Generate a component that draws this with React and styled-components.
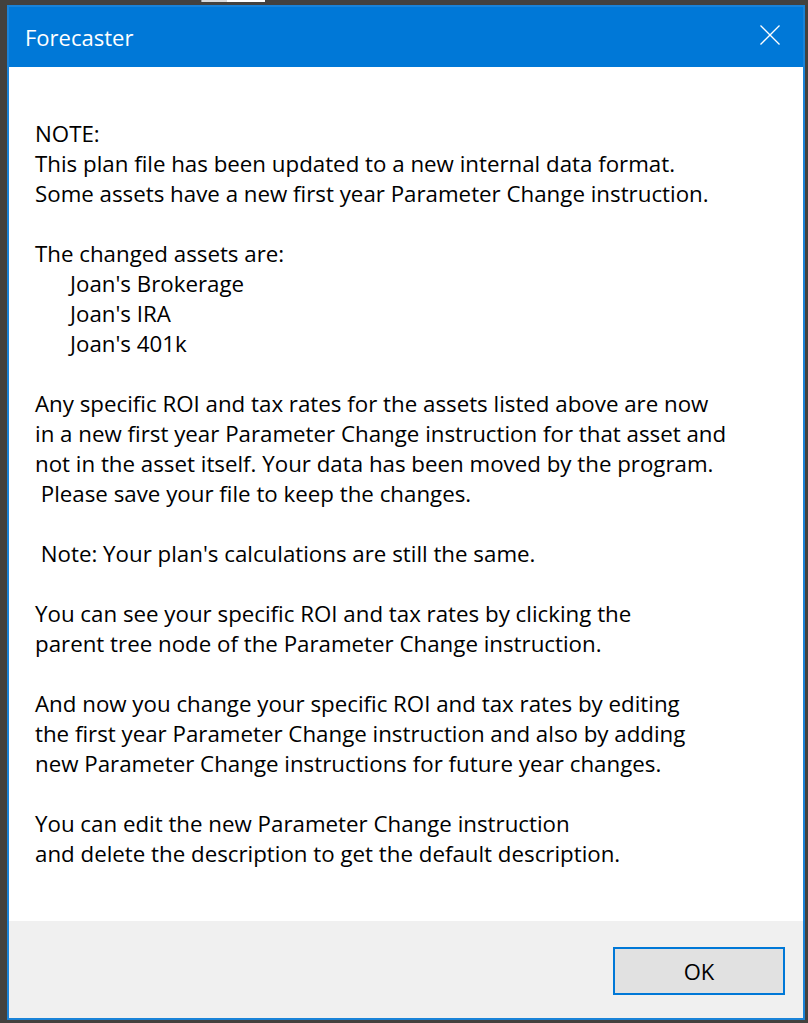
import React from "react";
import styled, { createGlobalStyle } from "styled-components";

const GlobalStyle = createGlobalStyle`
  html, body {
    margin: 0;
    padding: 0;
    background: #43413e;
  }
  body {
    font-family: "Open Sans", "Noto Sans", sans-serif;
  }
`;

const paragraphs = [
  {
    lines: [
      "NOTE:",
      "This plan file has been updated to a new internal data format.",
      "Some assets have a new first year Parameter Change instruction.",
    ],
  },
  {
    lines: ["The changed assets are:"],
    items: ["Joan's Brokerage", "Joan's IRA", "Joan's 401k"],
  },
  {
    lines: [
      "Any specific ROI and tax rates for the assets listed above are now",
      "in a new first year Parameter Change instruction for that asset and",
      "not in the asset itself. Your data has been moved by the program.",
      " Please save your file to keep the changes.",
    ],
  },
  {
    lines: [" Note: Your plan's calculations are still the same."],
  },
  {
    lines: [
      "You can see your specific ROI and tax rates by clicking the",
      "parent tree node of the Parameter Change instruction.",
    ],
  },
  {
    lines: [
      "And now you change your specific ROI and tax rates by editing",
      "the first year Parameter Change instruction and also by adding",
      "new Parameter Change instructions for future year changes.",
    ],
  },
  {
    lines: [
      "You can edit the new Parameter Change instruction",
      "and delete the description to get the default description.",
    ],
  },
];

const CloseIcon = () => (
  <svg width="20" height="20" viewBox="0 0 20 20" fill="none">
    <path d="M0.5 0.5 L19.5 19.5 M19.5 0.5 L0.5 19.5" stroke="#fff" strokeWidth="1.3" />
  </svg>
);

const App = () => (
  <>
    <GlobalStyle />
    <Desktop>
      <BackStrip>
        <BackTab />
        <BackTab $light />
      </BackStrip>
      <Window>
        <TitleBar>
          <Title>Forecaster</Title>
          <CloseButton aria-label="Close">
            <CloseIcon />
          </CloseButton>
        </TitleBar>
        <Body>
          {paragraphs.map((p, i) => (
            <Paragraph key={i}>
              {p.lines.map((line) => (
                <Line key={line}>{line}</Line>
              ))}
              {p.items &&
                p.items.map((item) => (
                  <Line key={item} $indent>
                    {item}
                  </Line>
                ))}
            </Paragraph>
          ))}
        </Body>
        <Footer>
          <OkButton>OK</OkButton>
        </Footer>
      </Window>
    </Desktop>
  </>
);

const Desktop = styled.div`
  width: 808px;
  height: 1023px;
  display: flex;
  flex-direction: column;
  overflow: hidden;
`;

const BackStrip = styled.div`
  height: 5px;
  display: flex;
  align-items: flex-start;
  padding-left: 201px;
`;

const BackTab = styled.div`
  height: 2px;
  width: ${(p) => (p.$light ? "38px" : "25px")};
  background: ${(p) => (p.$light ? "#ffffff" : "#dcdcdc")};
  border-left: ${(p) => (p.$light ? "none" : "1px solid #a0a0a0")};
`;

const Window = styled.div`
  box-sizing: border-box;
  margin-left: 7px;
  width: 798px;
  height: 1015px;
  border: 2px solid #1a83d8;
  display: flex;
  flex-direction: column;
  background: #fff;
`;

const TitleBar = styled.div`
  height: 60px;
  flex: none;
  background: #0078d7;
  display: flex;
  align-items: center;
  justify-content: space-between;
`;

const Title = styled.div`
  color: #fff;
  font-size: 22px;
  padding-left: 16px;
  padding-bottom: 1px;
`;

const CloseButton = styled.div`
  width: 66px;
  height: 60px;
  display: flex;
  align-items: center;
  justify-content: center;
  padding-bottom: 4px;
  box-sizing: border-box;
`;

const Body = styled.div`
  flex: 1;
  box-sizing: border-box;
  padding: 52px 0 0 26px;
  color: #000;
  font-size: 22.3px;
  line-height: 30px;
`;

const Paragraph = styled.div`
  margin-bottom: 30px;
`;

const Line = styled.div`
  white-space: pre;
  padding-left: ${(p) => (p.$indent ? "35px" : "0")};
`;

const Footer = styled.div`
  height: 97px;
  flex: none;
  background: #f0f0f0;
  display: flex;
  justify-content: flex-end;
  align-items: flex-start;
  padding: 26px 18px 0 0;
  box-sizing: border-box;
`;

const OkButton = styled.div`
  box-sizing: border-box;
  width: 172px;
  height: 48px;
  border: 2px solid #0078d7;
  background: #e1e1e1;
  display: flex;
  align-items: center;
  justify-content: center;
  font-size: 22px;
  color: #000;
`;

export default App;
